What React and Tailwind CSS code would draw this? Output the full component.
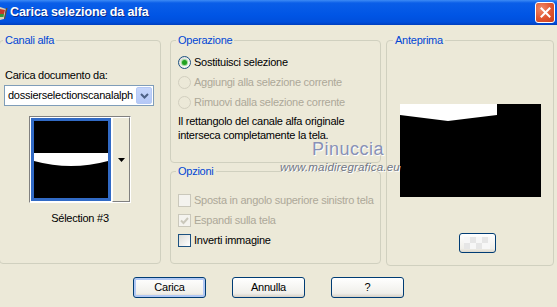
export default function App() {
  return (
    <div className="relative w-[557px] h-[307px] overflow-hidden bg-[#ece9d8] font-['Liberation_Sans',Arial,sans-serif] text-[11px] leading-[13px] tracking-[-0.25px] text-black whitespace-nowrap">
      <TitleBar />
      <div className="flex items-start pt-[9px]">
        {/* Canali alfa */}
        <fieldset className="ml-[-1px] w-[162px] h-[230px] rounded-[4px] border border-[#d0d0bf] px-[5px] flex flex-col">
          <legend className="ml-[-2px] px-[2px] text-[#0046d5]">Canali alfa</legend>
          <div className="mt-[22px]">Carica documento da:</div>
          <div className="mt-[3px] ml-[-1px] w-[150px] h-[21px] border border-[#7f9db9] bg-white flex items-center">
            <span className="pl-[3px] flex-1 overflow-hidden">dossierselectionscanalalph</span>
            <span className="w-[16px] h-[17px] mr-[1px] rounded-[2px] bg-[linear-gradient(to_bottom,#c6d6fb,#b5c8f6)] border border-[#b4c8f5] flex items-center justify-center">
              <svg width="9" height="6" viewBox="0 0 9 6">
                <path d="M1 1 L4.5 4.5 L8 1" fill="none" stroke="#4d6185" strokeWidth="2" />
              </svg>
            </span>
          </div>
          <div className="mt-[10px] self-center w-[102px] h-[87px] border border-t-[#808080] border-l-[#808080] border-r-white border-b-white bg-white flex">
            <div className="ml-[1px] mt-[1px] w-[80px] h-[83px] border-[3px] border-[#316ac5] bg-black">
              <svg width="74" height="77" viewBox="0 0 74 77" className="block">
                <path d="M0 32 H74 V40 Q37 50 0 40 Z" fill="#ffffff" />
              </svg>
            </div>
            <div className="ml-[1px] w-[18px] h-[85px] bg-[#ece9d8] border border-t-white border-l-white border-r-[#808080] border-b-[#808080] flex items-center justify-center">
              <svg width="7" height="4" viewBox="0 0 7 4">
                <path d="M0 0 H7 L3.5 4 Z" fill="#000" />
              </svg>
            </div>
          </div>
          <div className="mt-[9px] self-center">Sélection #3</div>
        </fieldset>

        {/* middle column */}
        <div className="ml-[9px] w-[211px] flex flex-col">
          <fieldset className="h-[129px] rounded-[4px] border border-[#d0d0bf] pl-[7px] pr-[4px] flex flex-col">
            <legend className="ml-[-2px] px-[2px] text-[#0046d5]">Operazione</legend>
            <div className="mt-[5px]">
              <Radio checked label="Sostituisci selezione" />
              <Radio disabled label="Aggiungi alla selezione corrente" />
              <Radio disabled label="Rimuovi dalla selezione corrente" />
            </div>
            <div className="mt-[2px] leading-[14px]">
              Il rettangolo del canale alfa originale
              <br />
              interseca completamente la tela.
            </div>
          </fieldset>
          <fieldset className="mt-[2px] h-[99px] rounded-[4px] border border-[#d0d0bf] pl-[7px] pr-[4px] flex flex-col">
            <legend className="ml-[-2px] px-[2px] text-[#0046d5]">Opzioni</legend>
            <div className="mt-[12px]">
              <Check disabled label="Sposta in angolo superiore sinistro tela" />
              <Check disabled checked label="Espandi sulla tela" />
              <Check label="Inverti immagine" />
            </div>
          </fieldset>
        </div>

        {/* Anteprima */}
        <fieldset className="ml-[5px] w-[168px] h-[232px] rounded-[4px] border border-[#d0d0bf] pl-[8px] pr-[8px] flex flex-col items-center">
          <legend className="ml-[-2px] px-[2px] text-[#0046d5]">Anteprima</legend>
          <div className="mt-[57px] w-[141px] h-[93px] bg-black">
            <svg width="141" height="93" viewBox="0 0 141 93" className="block">
              <path d="M0 0 H97 V11 Q72 14 48 17 Q24 14 0 11 Z" fill="#ffffff" />
            </svg>
          </div>
          <button className="mt-[36px] ml-[14px] w-[37px] h-[20px] rounded-[3px] border border-[#003c74] bg-[linear-gradient(to_bottom,#ffffff,#f0efea_80%,#dcd8cc)] flex items-center justify-center">
            <svg width="26" height="12" viewBox="0 0 26 12">
              <rect x="0" y="0" width="26" height="12" fill="#f7f7f7" />
              <rect x="6" y="0" width="6" height="6" fill="#e6e6e6" />
              <rect x="18" y="0" width="6" height="6" fill="#e6e6e6" />
              <rect x="0" y="6" width="6" height="6" fill="#e6e6e6" />
              <rect x="12" y="6" width="6" height="6" fill="#e6e6e6" />
            </svg>
          </button>
        </fieldset>
      </div>

      {/* bottom buttons */}
      <div className="mt-[11px] pl-[133px] flex gap-[26px]">
        <XPButton def label="Carica" />
        <XPButton label="Annulla" />
        <XPButton label="?" />
      </div>

      {/* watermark overlay */}
      <div className="absolute left-[312px] top-[139px] text-[18px] leading-[20px] tracking-[0.5px] text-[#8891b6] [text-shadow:1px_1px_0_#ffffff] pointer-events-none">
        Pinuccia
      </div>
      <div className="absolute left-[280px] top-[161px] text-[11.5px] leading-[13px] italic tracking-[0.2px] text-[#6f7585] [text-shadow:1px_1px_0_#ffffff] pointer-events-none">
        www.maidiregrafica.eu
      </div>
    </div>
  );
}

function TitleBar() {
  return (
    <div className="h-[25px] flex items-center justify-between bg-[linear-gradient(to_bottom,#3d8bf5_0%,#0a5ee8_12%,#0055e5_60%,#004fdc_88%,#003fbf_100%)]">
      <div className="flex items-center">
        <svg width="8" height="16" viewBox="0 0 8 16">
          <path d="M0 2 L6 4 L4 14 L0 15 Z" fill="#d8d0b8" />
          <path d="M0 4 L5 5 L4 9 L0 9 Z" fill="#c0392b" />
          <path d="M0 9 L4 9 L3.5 12 L0 12 Z" fill="#2e9a3a" />
          <path d="M6 3 L7.5 3 L5 14 L4 14 Z" fill="#6b4b2a" />
        </svg>
        <span className="ml-[2px] text-white font-bold text-[12.5px] tracking-[-0.1px] [text-shadow:1px_1px_0_#0a2a8a]">
          Carica selezione da alfa
        </span>
      </div>
      <div className="mr-[2px] w-[20px] h-[21px] rounded-[3px] border border-white bg-[radial-gradient(circle_at_30%_30%,#f08a6a,#e0542f_55%,#c8401e)] flex items-center justify-center">
        <svg width="11" height="11" viewBox="0 0 11 11">
          <path d="M1.5 1.5 L9.5 9.5 M9.5 1.5 L1.5 9.5" stroke="#ffffff" strokeWidth="2" strokeLinecap="square" />
        </svg>
      </div>
    </div>
  );
}

function Radio({ checked, disabled, label }) {
  return (
    <div className="flex items-center h-[20px]">
      <span
        className={
          disabled
            ? "w-[13px] h-[13px] rounded-full border border-[#d2cfbf] flex items-center justify-center"
            : "w-[13px] h-[13px] rounded-full border border-[#1c5180] bg-[linear-gradient(135deg,#dcdcd7,#ffffff)] flex items-center justify-center"
        }
      >
        {checked && <span className="w-[5px] h-[5px] rounded-full bg-[#21a121] shadow-[0_0_0_1px_#9ddc9d]" />}
      </span>
      <span className={disabled ? "ml-[3px] text-[#aca899]" : "ml-[3px]"}>{label}</span>
    </div>
  );
}

function Check({ checked, disabled, label }) {
  return (
    <div className="flex items-center h-[20px]">
      <span
        className={
          disabled
            ? "w-[13px] h-[13px] border border-[#cac8bb] bg-[#f4f3ee] flex items-center justify-center"
            : "w-[13px] h-[13px] border border-[#1c5180] bg-[linear-gradient(135deg,#dcdcd7,#ffffff)] flex items-center justify-center"
        }
      >
        {checked && (
          <svg width="9" height="9" viewBox="0 0 9 9">
            <path d="M1 4.5 L3.5 7 L8 2" fill="none" stroke="#cac8bb" strokeWidth="2" />
          </svg>
        )}
      </span>
      <span className={disabled ? "ml-[3px] text-[#aca899]" : "ml-[3px]"}>{label}</span>
    </div>
  );
}

function XPButton({ label, def }) {
  return (
    <button
      className={
        def
          ? "w-[73px] h-[21px] rounded-[3px] border border-[#003c74] bg-[linear-gradient(to_bottom,#ffffff,#f0efea_80%,#d6d0c5)] shadow-[inset_0_0_0_2px_#b1c8f4] text-[11px] leading-[13px] text-black flex items-center justify-center"
          : "w-[73px] h-[21px] rounded-[3px] border border-[#003c74] bg-[linear-gradient(to_bottom,#ffffff,#f0efea_80%,#d6d0c5)] text-[11px] leading-[13px] text-black flex items-center justify-center"
      }
    >
      {label}
    </button>
  );
}
